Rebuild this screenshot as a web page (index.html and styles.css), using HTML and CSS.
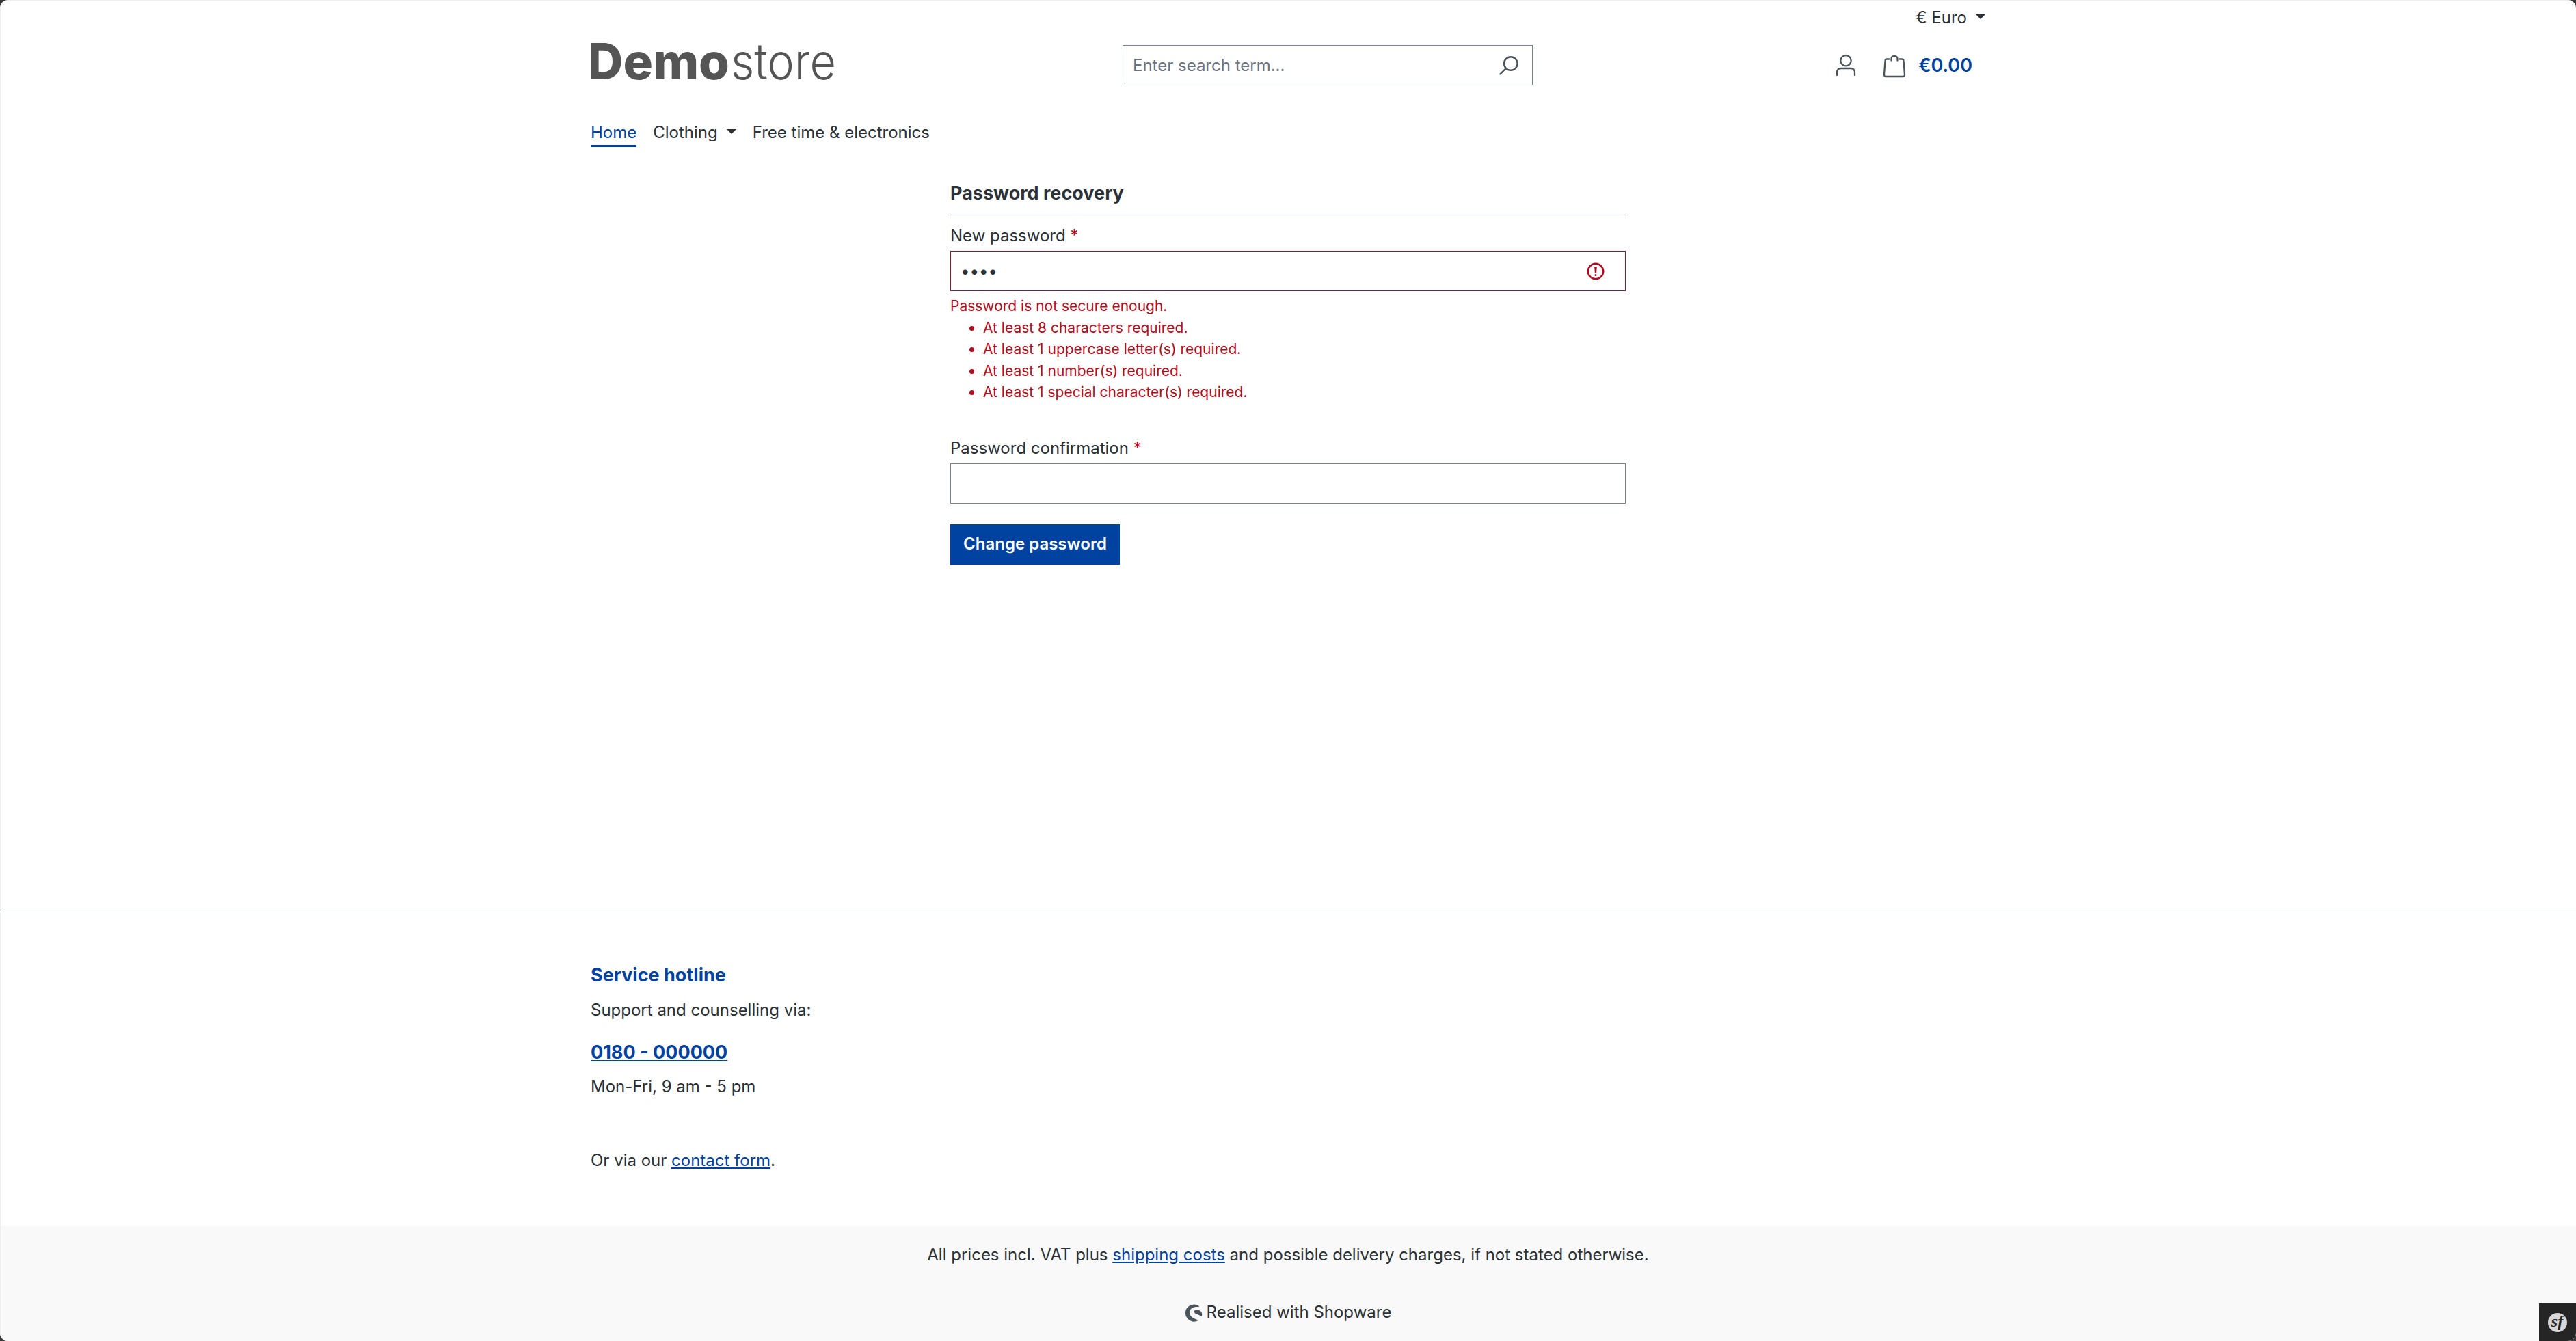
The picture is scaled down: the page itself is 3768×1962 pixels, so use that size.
FILE: index.html
```html
<!DOCTYPE html>
<html lang="en">
<head>
    <meta charset="UTF-8">
    <meta name="viewport" content="width=device-width, initial-scale=1.0">
    <title>Password recovery</title>
    <link rel="stylesheet" href="styles.css">
</head>
<body>
<div class="page">

<header class="container">
    <div class="top-bar">
        <button type="button" class="currency">€ Euro <span class="caret"></span></button>
    </div>
    <div class="header-row">
        <a class="logo" href="#" aria-label="Demostore">
            <svg width="360" height="82" viewBox="0 -22 360 82">
                <text class="logo-bold" x="-5" y="55.500" textLength="208" lengthAdjust="spacingAndGlyphs">Demo</text>
                <text class="logo-light" x="205" y="55.500" textLength="154" lengthAdjust="spacingAndGlyphs">store</text>
            </svg>
        </a>
        <form class="search">
            <input type="search" placeholder="Enter search term...">
            <svg class="search-icon" width="30" height="30" viewBox="0 0 30 30">
                <circle cx="17.8" cy="12" r="9.8"/>
                <path d="M10.8 19 2.5 27.3"/>
            </svg>
        </form>
        <div class="actions">
            <svg class="icon account" width="32" height="34" viewBox="0 0 32 34">
                <circle cx="16" cy="9.7" r="7.7"/>
                <path d="M3 31v-4.500a5.500 5.500 0 0 1 5.500-5.500h15a5.500 5.500 0 0 1 5.500 5.500V31"/>
            </svg>
            <svg class="icon bag" width="34" height="34" viewBox="0 0 34 34">
                <path d="M9.500 6.500H6a2.500 2.500 0 0 0-2.500 2.400L2 29.300A2.500 2.500 0 0 0 4.500 32h25a2.500 2.500 0 0 0 2.500-2.700L30.500 8.900A2.500 2.500 0 0 0 28 6.500h-3.500"/>
                <path d="M12.500 8.500V6a4 4 0 0 1 4-4h1a4 4 0 0 1 4 4v2.500"/>
            </svg>
            <span class="cart-total">€0.00</span>
        </div>
    </div>
    <nav class="main-nav">
        <a class="active" href="#">Home</a>
        <a href="#">Clothing <span class="caret"></span></a>
        <a href="#">Free time &amp; electronics</a>
    </nav>
</header>

<main class="recovery">
    <h1>Password recovery</h1>
    <form>
        <label for="newPassword">New password <span class="required">*</span></label>
        <div class="field invalid">
            <input type="password" id="newPassword" value="demo">
            <svg width="26" height="26" viewBox="0 0 26 26">
                <circle cx="13" cy="13" r="11.2"/>
                <path d="M11.200 6.300h3.600l-.7 9.200h-2.200z"/>
                <circle class="dot" cx="13" cy="18.500" r="1.600"/>
            </svg>
        </div>
        <div class="feedback">
            Password is not secure enough.
            <ul>
                <li>At least 8 characters required.</li>
                <li>At least 1 uppercase letter(s) required.</li>
                <li>At least 1 number(s) required.</li>
                <li>At least 1 special character(s) required.</li>
            </ul>
        </div>

        <label for="confirmPassword">Password confirmation <span class="required">*</span></label>
        <div class="field">
            <input type="password" id="confirmPassword">
        </div>

        <button type="button" class="btn-primary">Change password</button>
    </form>
</main>

<footer>
    <div class="container hotline">
        <h2>Service hotline</h2>
        <p>Support and counselling via:</p>
        <a class="phone" href="#">0180 - 000000</a>
        <p>Mon-Fri, 9 am - 5 pm</p>
        <p class="contact">Or via our <a href="#">contact form</a>.</p>
    </div>
    <div class="footer-bottom">
        <p>All prices incl. VAT plus <a href="#">shipping costs</a> and possible delivery charges, if not stated otherwise.</p>
        <p class="realised">
            <svg width="26" height="26" viewBox="0 0 26 26">
                <path d="M20.800 3.100A12.500 12.500 0 1 0 20 23.700C17.500 22.700 13 21 10.500 19 6.500 15.800 6 11.300 8.300 8 10.800 4.500 15.700 3.500 20.800 4.300z"/>
                <path d="M25.300 14.500C25 12 23.500 9.900 21 9 18.500 8.200 15 8.300 14 10c-1 1.800.8 3.500 3.200 4.600 2.600 1.200 5.500 2 7.300 3.600.6-1.200.9-2.400.8-3.700z"/>
            </svg>
            Realised with Shopware
        </p>
    </div>
</footer>

<div class="debug-toolbar">
    <svg width="28" height="28" viewBox="0 0 28 28">
        <circle cx="14" cy="14" r="14"/>
        <text x="13.500" y="19.500" text-anchor="middle">sf</text>
    </svg>
</div>

</div>
</body>
</html>
```
FILE: styles.css
```css
* {
    box-sizing: border-box;
}
html {
    background-color: #3a383b;
}
body {
    margin: 0;
    font-family: 'Inter', sans-serif;
    font-size: 24px;
    line-height: 36px;
    color: #2b3136;
}
h1, h2, p, ul {
    margin: 0;
}
a {
    color: #0042a0;
}
input, button {
    font: inherit;
    color: inherit;
}
.page {
    position: relative;
    display: flex;
    flex-direction: column;
    height: 1962px;
    background-color: #fff;
    border-radius: 12px;
    overflow: hidden;
}
/* thin window edge over the content */
.page::after {
    content: '';
    position: absolute;
    inset: 0;
    border-top: 1px solid #eee;
    border-left: 1px solid #eee;
    border-radius: 12px;
    pointer-events: none;
}
.container {
    width: 2040px;
    margin: 0 auto;
}

/* header */
.top-bar {
    display: flex;
    justify-content: flex-end;
    padding-top: 8px;
}
.currency {
    display: flex;
    align-items: center;
    gap: 13px;
    height: 36px;
    padding: 0;
    border: none;
    background: none;
}
.caret {
    display: inline-block;
    margin-bottom: 4px;
    border-top: 7px solid currentColor;
    border-left: 7px solid transparent;
    border-right: 7px solid transparent;
}
.header-row {
    display: grid;
    grid-template-columns: 778px 600px 1fr;
    align-items: start;
    padding-top: 16px;
}
.logo {
    display: block;
    height: 60px;
}
.logo svg {
    display: block;
    margin-top: -22px;
}
.logo text {
    font-size: 73px;
    fill: #555;
}
.logo-bold {
    font-weight: 800;
}
.logo-light {
    font-weight: 300;
}
.search {
    display: flex;
    align-items: center;
    height: 59px;
    margin-top: 6px;
    padding: 0 19px 0 14px;
    border: 1px solid #798490;
}
.search input {
    flex: 1;
    height: 36px;
    padding: 0;
    border: none;
    background: none;
}
.search input::placeholder {
    color: #6b7280;
    opacity: 1;
}
.search-icon {
    fill: none;
    stroke: #4a545b;
    stroke-width: 2.4;
    stroke-linecap: round;
}
.actions {
    display: flex;
    align-items: center;
    justify-content: flex-end;
    height: 59px;
    margin-top: 6px;
    padding-right: 19px;
}
.icon {
    fill: none;
    stroke: #4a545b;
    stroke-width: 2.3;
    stroke-linecap: round;
}
.bag {
    margin: 2px 18px 0 38px;
}
.cart-total {
    font-size: 27px;
    font-weight: 600;
    color: #0042a0;
}
.main-nav {
    display: flex;
    gap: 24px;
    padding-top: 50px;
}
.main-nav a {
    display: flex;
    align-items: center;
    gap: 13px;
    height: 40px;
    padding: 1px 0 3px;
    color: inherit;
    text-decoration: none;
}
.main-nav a.active {
    padding-bottom: 0;
    border-bottom: 3px solid #0042a0;
    color: #0042a0;
}

/* form */
.recovery {
    flex: 1;
    width: 988px;
    margin: 0 auto;
    padding-top: 49px;
}
h1, h2 {
    font-size: 27px;
    font-weight: 700;
}
.recovery h1 {
    height: 51px;
    margin-bottom: 11px;
    padding-top: 1px;
    border-bottom: 1px solid #798490;
}
label {
    display: block;
    margin-bottom: 4px;
    padding-top: 1px;
}
.required {
    color: #c20017;
}
.field {
    display: flex;
    align-items: center;
    height: 59px;
    padding: 0 30px 0 14px;
    border: 1px solid #798490;
}
.field input {
    flex: 1;
    height: 36px;
    padding: 0;
    border: none;
    outline: none;
    background: none;
}
.invalid {
    border-color: #8c1a2e;
}
.invalid svg {
    fill: #b00e20;
}
.invalid svg circle:first-child {
    fill: none;
    stroke: #b00e20;
    stroke-width: 2.6;
}
.feedback {
    margin: 6px 0 47px;
    font-size: 21px;
    line-height: 31.5px;
    color: #b00e20;
}
.feedback ul {
    padding-left: 48px;
}
.btn-primary {
    display: block;
    width: 248px;
    height: 59px;
    margin-top: 30px;
    padding: 0;
    border: none;
    background-color: #0042a0;
    color: #fff;
    font-weight: 600;
}

/* footer */
footer {
    border-top: 1px solid #798490;
}
.hotline {
    height: 459px;
    padding-top: 74px;
}
.hotline h2 {
    margin-bottom: 15px;
    color: #0042a0;
}
.phone {
    display: block;
    width: max-content;
    margin: 26px 0 14px;
    font-size: 27px;
    font-weight: 700;
}
.contact {
    margin-top: 72px;
}
.footer-bottom {
    height: 168px;
    padding-top: 24px;
    background-color: #f9f9f9;
    text-align: center;
}
.realised {
    display: flex;
    align-items: center;
    justify-content: center;
    gap: 6px;
    margin-top: 48px;
}
.realised svg {
    margin-top: 2px;
    fill: #4a545b;
}

/* sits over the bottom right corner of the page */
.debug-toolbar {
    position: absolute;
    right: 0;
    bottom: 0;
    display: flex;
    align-items: center;
    justify-content: center;
    width: 54px;
    height: 55px;
    background-color: #252525;
}
.debug-toolbar circle {
    fill: #d8d8d8;
}
.debug-toolbar text {
    font-family: 'Liberation Serif', serif;
    font-size: 24px;
    font-style: italic;
    font-weight: 700;
    fill: #252525;
}
```
